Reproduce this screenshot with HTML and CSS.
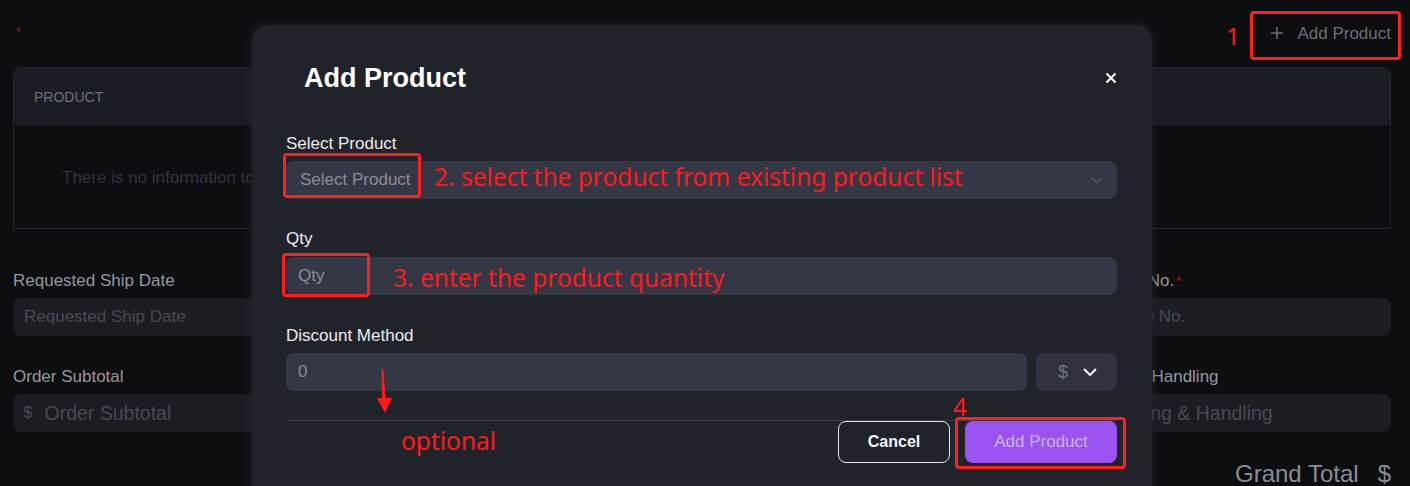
FILE: index.html
```html
<!DOCTYPE html>
<html lang="en">
<head>
<meta charset="utf-8">
<title>Add Product</title>
<link rel="stylesheet" href="styles.css">
</head>
<body>
<div class="page">
  <div class="topbar">
    <span class="req-mark">*</span>
    <button class="ghost-add">
      <svg class="plus" viewBox="0 0 14 14" width="14" height="14"><path d="M7 1v12M1 7h12" stroke="currentColor" stroke-width="1.6" fill="none"/></svg>
      <span>Add Product</span>
    </button>
  </div>

  <div class="table">
    <div class="thead"><span>PRODUCT</span></div>
    <div class="tbody">There is no information to display</div>
  </div>

  <div class="form-grid">
    <div class="field"><label>Requested Ship Date</label><div class="input">Requested Ship Date</div></div>
    <div class="field"><label>Ship Via</label><div class="input">Ship Via</div></div>
    <div class="field"><label>Payment Terms</label><div class="input">Payment Terms</div></div>
    <div class="field"><label>Reference No.<span class="req">*</span></label><div class="input">Reference No.</div></div>
    <div class="field"><label>Order Subtotal</label><div class="input money"><span class="cur">$</span><span>Order Subtotal</span></div></div>
    <div class="field"><label>Discount</label><div class="input money"><span class="cur">$</span><span>Discount</span></div></div>
    <div class="field"><label>Tax</label><div class="input money"><span class="cur">$</span><span>Tax</span></div></div>
    <div class="field"><label>Shipping &amp; Handling</label><div class="input money"><span class="cur">$</span><span>Shipping &amp; Handling</span></div></div>
  </div>

  <div class="grand"><span>Grand Total</span><span>$</span></div>
</div>

<div class="modal">
  <div class="modal-head">
    <h2>Add Product</h2>
    <svg class="close" viewBox="0 0 12 12" width="12" height="12"><path d="M1.5 1.5l9 9M10.5 1.5l-9 9" stroke="#ffffff" stroke-width="2" fill="none"/></svg>
  </div>
  <div class="mfield first">
    <label>Select Product</label>
    <div class="minput select">
      <span>Select Product</span>
      <svg class="chev-sm" viewBox="0 0 12 7" width="12" height="7"><path d="M1 1l5 5 5-5" stroke="#5b5e6a" stroke-width="1.2" fill="none"/></svg>
    </div>
  </div>
  <div class="mfield qty">
    <label>Qty</label>
    <div class="minput"><span>Qty</span></div>
  </div>
  <div class="mfield disc">
    <label>Discount Method</label>
    <div class="discount-row">
      <div class="minput grow"><span>0</span></div>
      <div class="minput currency">
        <span class="dollar">$</span>
        <svg viewBox="0 0 14 8" width="14" height="8"><path d="M1 1l6 6 6-6" stroke="#ffffff" stroke-width="2" fill="none"/></svg>
      </div>
    </div>
  </div>
  <div class="modal-foot">
    <button class="btn-cancel">Cancel</button>
    <button class="btn-primary">Add Product</button>
  </div>
</div>

<div class="note-box box-1"></div>
<div class="note-box box-2"></div>
<div class="note-box box-3"></div>
<div class="note-box box-4"></div>
<div class="note n1">1</div>
<div class="note n2">2. select the product from existing product list</div>
<div class="note n3">3. enter the product quantity</div>
<div class="note n4">4</div>
<div class="note n-opt">optional</div>
<svg class="note-arrow" viewBox="0 0 18 46" width="18" height="46"><polygon points="5.5,1 7.5,1 9.5,32 6,32" fill="#ff1a1a"/><polygon points="1,30 16,30 9,45" fill="#ff1a1a"/></svg>
</body>
</html>
```

FILE: styles.css
```css
* { box-sizing: border-box; }
html, body { margin: 0; padding: 0; }
body {
  width: 1410px;
  height: 486px;
  overflow: hidden;
  background: #0d0e12;
  font-family: "Liberation Sans", Arial, sans-serif;
  position: relative;
}

.page { padding: 0 19px 0 13px; }

.topbar {
  height: 67px;
  display: flex;
  justify-content: space-between;
  align-items: flex-start;
}
.req-mark {
  color: #8a2222;
  font-size: 13px;
  margin: 24px 0 0 3px;
}
.ghost-add {
  margin-top: 22px;
  background: none;
  border: none;
  padding: 0;
  display: flex;
  align-items: center;
  gap: 13px;
  color: #6c6d77;
  font-family: inherit;
  font-size: 17px;
  line-height: 24px;
}
.plus { margin-top: -2px; }

.table {
  border: 1px solid #24262d;
  border-radius: 8px 8px 0 0;
  overflow: hidden;
}
.thead {
  height: 57px;
  background: #1b1d24;
  display: flex;
  align-items: center;
  padding-left: 20px;
  color: #6e6f78;
  font-size: 14px;
}
.tbody {
  height: 103px;
  display: flex;
  align-items: center;
  padding-left: 48px;
  padding-top: 2px;
  color: #34353d;
  font-size: 17px;
}

.form-grid {
  margin-top: 42px;
  display: grid;
  grid-template-columns: repeat(4, 1fr);
  column-gap: 24px;
  row-gap: 31px;
}
.field label {
  display: block;
  line-height: 20px;
  font-size: 17px;
  color: #97979f;
  margin-bottom: 7px;
}
.field .req { color: #8a2222; font-size: 14px; margin-left: 2px; vertical-align: top; }
.input {
  height: 38px;
  border-radius: 8px;
  background: #1b1d23;
  display: flex;
  align-items: center;
  padding-left: 11px;
  color: #494a53;
  font-size: 17px;
}
.input.money { font-size: 19.5px; padding-left: 10px; }
.input .cur { font-size: 17px; margin-right: 12px; }

.grand {
  margin-top: 28px;
  display: flex;
  justify-content: flex-end;
  gap: 19px;
  color: #8b8c94;
  font-size: 24px;
  line-height: 28px;
}

/* modal */
.modal {
  position: absolute;
  left: 252px;
  top: 25px;
  width: 900px;
  height: 490px;
  background: #21232b;
  border-radius: 16px;
  padding: 37px 35px 0 34px;
  box-shadow: 0 0 8px 2px rgba(40, 42, 50, 0.5);
}
.modal-head {
  height: 32px;
  display: flex;
  justify-content: space-between;
  align-items: center;
}
.modal-head h2 {
  margin: 0 0 0 18px;
  font-size: 27px;
  font-weight: bold;
  color: #ffffff;
  line-height: 32px;
}

.mfield { margin-top: 30px; }
.mfield.first { margin-top: 40px; }
.mfield.disc { margin-top: 31px; }
.mfield label {
  display: block;
  line-height: 20px;
  font-size: 17px;
  color: #ececf0;
  margin-bottom: 7px;
}
.mfield.qty label { margin-bottom: 8px; }
.minput {
  height: 38px;
  border-radius: 8px;
  background: #343846;
  display: flex;
  align-items: center;
  padding: 0 12px 0 12px;
  color: #8b8c95;
  font-size: 17px;
}
.select { justify-content: space-between; padding-left: 14px; padding-right: 14px; }
.discount-row { display: flex; gap: 9px; }
.grow { flex: 1; }
.currency {
  width: 81px;
  background: #30333f;
  padding: 0 20px 0 22px;
  justify-content: space-between;
}
.dollar { color: #75767f; font-size: 18px; }

.modal-foot {
  margin-top: 29px;
  border-top: 1px solid #373a45;
  display: flex;
  justify-content: flex-end;
  gap: 15px;
}
.btn-cancel, .btn-primary {
  height: 42px;
  border-radius: 8px;
  font-family: inherit;
  cursor: pointer;
}
.btn-cancel {
  width: 112px;
  background: transparent;
  border: 1px solid #e6e6ea;
  color: #f4f4f6;
  font-size: 16px;
  font-weight: bold;
}
.btn-primary {
  width: 152px;
  background: #9c52f1;
  border: none;
  color: #c6b6e2;
  font-size: 17px;
}

/* annotations */
.note-box {
  position: absolute;
  border: 3px solid #ff1f1f;
  border-radius: 4px;
}
.box-1 { left: 1250px; top: 11px; width: 151px; height: 49px; }
.box-2 { left: 283px; top: 153px; width: 138px; height: 45px; }
.box-3 { left: 282px; top: 253px; width: 88px; height: 44px; }
.box-4 { left: 955px; top: 417px; width: 171px; height: 52px; }

.note {
  position: absolute;
  color: #ff1a1a;
  font-family: "Noto Sans", "Open Sans", sans-serif;
  font-size: 24.5px;
  line-height: 30px;
  white-space: nowrap;
}
.n1 { left: 1226px; top: 21px; font-size: 24px; }
.n2 { left: 434px; top: 162px; }
.n3 { left: 393px; top: 263px; }
.n4 { left: 953px; top: 392px; }
.n-opt { left: 401px; top: 426px; }
.note-arrow { position: absolute; left: 376px; top: 368px; }
```
